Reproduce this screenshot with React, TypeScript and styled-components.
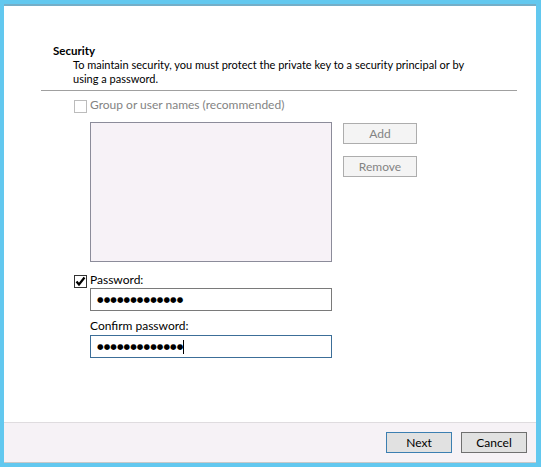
import * as React from 'react';
import styled, { createGlobalStyle } from 'styled-components';

const Global = createGlobalStyle`
	html, body {
		margin: 0;
		padding: 0;
		background: #62c8ef;
	}
	* {
		box-sizing: border-box;
	}
`;

// Blue window frame around the wizard page
const Frame = styled.div`
	width: 541px;
	height: 467px;
	background: #62c8ef;
	padding: 4px 5px 4px 4px;
	font-family: Lato, "Noto Sans", sans-serif;
	font-size: 12px;
	color: #000;
`;

const Window = styled.div`
	height: 100%;
	display: flex;
	flex-direction: column;
	background: #fff;
	border-top: 2px solid #74aec8;
	border-bottom: 1px solid #c8c8c8;
`;

const Body = styled.div`
	flex: 1;
	padding: 37px 0 0 49px;
	display: flex;
	flex-direction: column;
`;

const Title = styled.div`
	font-weight: bold;
	font-size: 11.5px;
	line-height: 15px;
`;

const Desc = styled.div`
	margin-left: 20px;
	font-size: 11px;
	line-height: 14px;
	white-space: nowrap;
`;

const Rule = styled.div`
	margin: 4px 0 0 -12px;
	width: 476px;
	height: 1px;
	background: #a0a0a0;
`;

const CheckRow = styled.div<{ $top: number; $disabled?: boolean }>`
	display: flex;
	align-items: flex-start;
	gap: 3px;
	margin: ${p => p.$top}px 0 0 21px;
	height: 13px;
	line-height: 13px;
	color: ${p => (p.$disabled ? '#838383' : '#000')};
`;

const Box = styled.span<{ $checked?: boolean }>`
	width: 13px;
	height: 13px;
	flex: none;
	display: flex;
	align-items: center;
	justify-content: center;
	background: #fff;
	border: 1px solid ${p => (p.$checked ? '#333' : '#bcbcbc')};
`;

const LabelText = styled.span`
	margin-top: -2px;
`;

const Indent = styled.div`
	margin-left: 37px;
`;

const ListRow = styled(Indent)`
	margin-top: 9px;
	display: flex;
	align-items: flex-start;
	gap: 11px;
`;

const ListBox = styled.div`
	width: 242px;
	height: 140px;
	background: #f7f2f7;
	border: 1px solid #8c8c9a;
`;

const SideButtons = styled.div`
	margin-top: 1px;
	display: flex;
	flex-direction: column;
	gap: 12px;
`;

const Button = styled.button<{ $variant?: 'default' | 'normal' | 'disabled' }>`
	width: ${p => (p.$variant === 'disabled' ? 74 : 66)}px;
	height: 21px;
	padding: 0;
	font: inherit;
	color: ${p => (p.$variant === 'disabled' ? '#838383' : '#000')};
	background: ${p => (p.$variant === 'disabled' ? '#f4f4f4' : '#e1e1e1')};
	border: 1px solid
		${p =>
			p.$variant === 'disabled' ? '#adadad' : p.$variant === 'default' ? '#3c7fb1' : '#707070'};
	border-radius: 0;
`;

const Field = styled(Indent)<{ $focused?: boolean }>`
	width: 242px;
	height: 23px;
	border: 1px solid ${p => (p.$focused ? '#3c6e98' : '#7a7a7a')};
	background: #fff;
	display: flex;
	align-items: center;
	padding-left: 6px;
`;

const Dots = styled.span`
	font-family: "DejaVu Sans", sans-serif;
	font-size: 7.5px;
	letter-spacing: 0.1px;
	line-height: 14px;
`;

const Caret = styled.span`
	width: 1px;
	height: 14px;
	background: #000;
`;

const FieldLabel = styled(Indent)`
	margin-top: 7px;
	margin-bottom: 2px;
	line-height: 15px;
`;

const Footer = styled.div`
	height: 40px;
	flex: none;
	border-top: 1px solid #dfdcdf;
	background: #f6f2f6;
	display: flex;
	justify-content: flex-end;
	align-items: center;
	gap: 9px;
	padding: 0 9px 1px 0;
`;

const Check = () => (
	<svg width="11" height="11" viewBox="0 0 11 11">
		<path d="M1.5 5.5 L4 8.5 L9.5 1.5" fill="none" stroke="#000" strokeWidth="2.2" />
	</svg>
);

const DOTS = '●●●●●●●●●●●●●';

export default function App() {
	return (
		<Frame>
			<Global />
			<Window>
				<Body>
					<Title>Security</Title>
					<Desc>
						To maintain security, you must protect the private key to a security principal or by
						<br />
						using a password.
					</Desc>
					<Rule />
					<CheckRow $top={9} $disabled>
						<Box />
						<LabelText>Group or user names (recommended)</LabelText>
					</CheckRow>
					<ListRow>
						<ListBox />
						<SideButtons>
							<Button $variant="disabled">Add</Button>
							<Button $variant="disabled">Remove</Button>
						</SideButtons>
					</ListRow>
					<CheckRow $top={13}>
						<Box $checked>
							<Check />
						</Box>
						<LabelText>Password:</LabelText>
					</CheckRow>
					<Field>
						<Dots>{DOTS}</Dots>
					</Field>
					<FieldLabel>Confirm password:</FieldLabel>
					<Field $focused>
						<Dots>{DOTS}</Dots>
						<Caret />
					</Field>
				</Body>
				<Footer>
					<Button $variant="default">Next</Button>
					<Button $variant="normal">Cancel</Button>
				</Footer>
			</Window>
		</Frame>
	);
}
